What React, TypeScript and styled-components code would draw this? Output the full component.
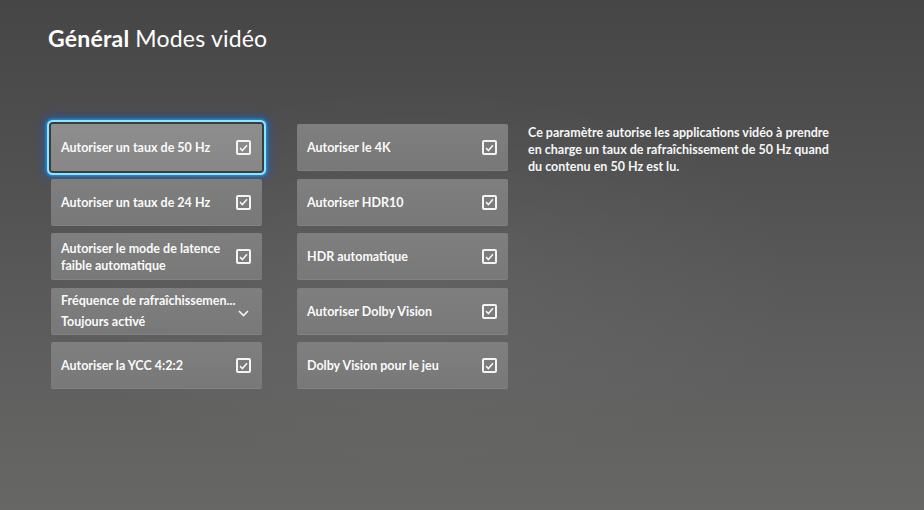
import React from "react";
import styled, { createGlobalStyle } from "styled-components";

const GlobalStyle = createGlobalStyle`
  html, body {
    margin: 0;
    padding: 0;
    height: 100%;
  }
  body {
    font-family: Lato, "Noto Sans", "Liberation Sans", sans-serif;
    color: #fff;
    background: #555;
  }
`;

const Page = styled.div`
  width: 924px;
  height: 510px;
  box-sizing: border-box;
  padding: 22px 0 0 48px;
  overflow: hidden;
  background:
    radial-gradient(ellipse 60% 55% at 45% 55%, rgba(255, 255, 255, 0.05), rgba(255, 255, 255, 0) 70%),
    linear-gradient(180deg, #464646 0%, #515151 35%, #5e5e5e 70%, #676765 100%);
`;

const Title = styled.h1`
  margin: 0;
  font-size: 23px;
  line-height: 32px;
  font-weight: 400;
  letter-spacing: 0.2px;
`;

const Strong = styled.span`
  font-weight: 700;
  margin-right: 6px;
`;

const Content = styled.div`
  display: flex;
  align-items: flex-start;
  margin-top: 70px;
  padding-left: 3px;
`;

const Column = styled.div`
  display: flex;
  flex-direction: column;
  gap: 7.5px;
  width: 211px;
  & + & {
    margin-left: 35px;
  }
`;

const Tile = styled.div<{ $focused?: boolean }>`
  position: relative;
  height: 47px;
  box-sizing: border-box;
  padding: 0 10px 0 10px;
  display: flex;
  align-items: center;
  justify-content: space-between;
  border-radius: 2px;
  background: ${(p) =>
    p.$focused
      ? "linear-gradient(180deg, #8e8e8e, #878787)"
      : "linear-gradient(180deg, #7f7f7f, #787878)"};
  box-shadow: ${(p) =>
    p.$focused
      ? "0 0 0 2px #3c3c3c, 0 0 0 4px #86e8ff, 0 0 3px 5px rgba(30, 160, 255, 0.85), 0 0 10px 7px rgba(0, 100, 255, 0.4)"
      : "inset 0 -1px 0 rgba(255,255,255,0.08)"};
`;

const Label = styled.div`
  font-size: 12.5px;
  line-height: 17px;
  font-weight: 700;
  color: #fafafa;
  min-width: 0;
  flex: 1;
  white-space: nowrap;
`;

const SubLabel = styled.div`
  margin-top: 4px;
`;

const Check = styled.div`
  width: 15px;
  height: 15px;
  flex: none;
  box-sizing: border-box;
  border: 2px solid #f4f4f4;
  border-radius: 2px;
  display: flex;
  align-items: center;
  justify-content: center;
  margin-left: 8px;
  margin-right: 1px;
`;

const Chevron = styled.svg`
  flex: none;
  margin-left: 4px;
  margin-right: 3px;
  margin-top: 4px;
`;

const Description = styled.p`
  margin: 0 0 0 20px;
  width: 310px;
  font-size: 12.5px;
  line-height: 17px;
  font-weight: 700;
  color: #f6f6f6;
`;

const CheckBox = () => (
  <Check>
    <svg width="9" height="8" viewBox="0 0 9 8">
      <path d="M1 4.2 L3.4 6.5 L8 1.3" fill="none" stroke="#f4f4f4" strokeWidth="1.6" />
    </svg>
  </Check>
);

const leftItems: { label: React.ReactNode; focused?: boolean }[] = [
  { label: "Autoriser un taux de 50 Hz", focused: true },
  { label: "Autoriser un taux de 24 Hz" },
  { label: <>Autoriser le mode de latence<br />faible automatique</> },
];

const rightItems = [
  "Autoriser le 4K",
  "Autoriser HDR10",
  "HDR automatique",
  "Autoriser Dolby Vision",
  "Dolby Vision pour le jeu",
];

export default function App() {
  return (
    <>
      <GlobalStyle />
      <Page>
        <Title>
          <Strong>Général</Strong>Modes vidéo
        </Title>
        <Content>
          <Column>
            {leftItems.map((item, i) => (
              <Tile key={i} $focused={item.focused}>
                <Label>{item.label}</Label>
                <CheckBox />
              </Tile>
            ))}
            <Tile>
              <Label>
                <div>Fréquence de rafraîchissemen...</div>
                <SubLabel>Toujours activé</SubLabel>
              </Label>
              <Chevron width="11" height="7" viewBox="0 0 11 7">
                <path d="M1 1 L5.5 5.5 L10 1" fill="none" stroke="#f4f4f4" strokeWidth="1.6" />
              </Chevron>
            </Tile>
            <Tile>
              <Label>Autoriser la YCC 4:2:2</Label>
              <CheckBox />
            </Tile>
          </Column>
          <Column>
            {rightItems.map((label) => (
              <Tile key={label}>
                <Label>{label}</Label>
                <CheckBox />
              </Tile>
            ))}
          </Column>
          <Description>
            Ce paramètre autorise les applications vidéo à prendre en charge un taux de
            rafraîchissement de 50 Hz quand du contenu en 50 Hz est lu.
          </Description>
        </Content>
      </Page>
    </>
  );
}
